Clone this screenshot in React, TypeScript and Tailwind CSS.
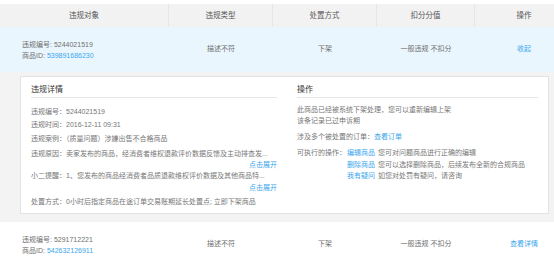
import React from "react";

const font = { fontFamily: '"Liberation Sans", "Noto Sans CJK SC", sans-serif' };

function Header() {
  const cols = [
    { w: "w-[169px]", t: "违规对象" },
    { w: "w-[104px]", t: "违规类型" },
    { w: "w-[104px]", t: "处置方式" },
    { w: "w-[98px]", t: "扣分分值" },
    { w: "w-[98px]", t: "操作" },
  ];
  return (
    <div className="flex h-[23px] bg-[#f2f2f2] text-[7.5px] text-[#555]">
      {cols.map((c, i) => (
        <div
          key={i}
          className={`${c.w} flex items-center justify-center ${i < 4 ? "border-r border-[#e6e6e6]" : ""}`}
        >
          {c.t}
        </div>
      ))}
    </div>
  );
}

function Row({ id, gid, action, bg }: { id: string; gid: string; action: string; bg: string }) {
  return (
    <div className={`flex h-[45px] text-[7px] text-[#707070] ${bg}`}>
      <div className="w-[169px] flex flex-col justify-center pl-[22px] leading-[11px]">
        <div>违规编号: {id}</div>
        <div>
          商品ID: <span className="text-[#3aa6ee]">{gid}</span>
        </div>
      </div>
      <div className="w-[104px] flex items-center justify-center">描述不符</div>
      <div className="w-[104px] flex items-center justify-center">下架</div>
      <div className="w-[98px] flex items-center justify-center">一般违规 不扣分</div>
      <div className="w-[98px] flex items-center justify-center text-[#3aa6ee]">{action}</div>
    </div>
  );
}

function Detail() {
  return (
    <div className="bg-[#f3f3f3] pt-[4px] pb-[8px]">
      <div className="ml-[20px] w-[529px] bg-white border border-[#e3e3e3] pt-[7px] pb-[6px] flex text-[7px] text-[#777]">
        <div className="ml-[10px] w-[246px]">
          <div className="text-[8px] text-[#333] leading-[12px] border-b border-[#e6e6e6] pb-[1px]">违规详情</div>
          <div className="leading-[11px]">
            <div className="mt-[8px]">违规编号：5244021519</div>
            <div className="mt-[2px]">违规时间：2016-12-11 09:31</div>
            <div className="mt-[3px]">违规案例：（质量问题）涉嫌出售不合格商品</div>
            <div className="mt-[4px] whitespace-nowrap overflow-hidden w-[240px]">违规原因：卖家发布的商品，经消费者维权退款评价数据反馈及主动排查发...</div>
            <div className="text-right text-[#3aa6ee]">点击展开</div>
            <div className="whitespace-nowrap overflow-hidden w-[240px]">小二提醒：1、您发布的商品经消费者品质退款维权评价数据及其他商品特...</div>
            <div className="mt-[1px] text-right text-[#3aa6ee]">点击展开</div>
            <div className="mt-[3px] whitespace-nowrap">处置方式：0小时后指定商品在途订单交易账期延长处置点; 立即下架商品</div>
          </div>
        </div>
        <div className="ml-[20px] w-[241px]">
          <div className="text-[8px] text-[#333] leading-[12px] border-b border-[#e6e6e6] pb-[1px]">操作</div>
          <div className="leading-[11px]">
            <div className="mt-[6px]">此商品已经被系统下架处理，您可以重新编辑上架</div>
            <div>该条记录已过申诉期</div>
            <div className="mt-[5px]">
              涉及多个被处置的订单：<span className="text-[#3aa6ee]">查看订单</span>
            </div>
            <div className="mt-[5px] flex">
              <div className="w-[50px] whitespace-nowrap">可执行的操作：</div>
              <div>
                <div>
                  <span className="text-[#3aa6ee]">编辑商品</span>
                  <span className="ml-[3px]">您可对问题商品进行正确的编辑</span>
                </div>
                <div className="mt-[1px]">
                  <span className="text-[#3aa6ee]">删除商品</span>
                  <span className="ml-[3px]">您可以选择删除商品，后续发布全新的合规商品</span>
                </div>
                <div>
                  <span className="text-[#3aa6ee]">我有疑问</span>
                  <span className="ml-[3px]">如您对处罚有疑问，请咨询</span>
                </div>
              </div>
            </div>
          </div>
        </div>
      </div>
    </div>
  );
}

export default function App() {
  return (
    <div className="w-[554px] h-[262px] overflow-hidden bg-white" style={font}>
      <div className="w-[573px] pt-[4px]">
        <Header />
        <Row id="5244021519" gid="539891686230" action="收起" bg="bg-[#eaf6fd]" />
        <Detail />
        <Row id="5291712221" gid="542632126911" action="查看详情" bg="bg-white" />
      </div>
    </div>
  );
}
